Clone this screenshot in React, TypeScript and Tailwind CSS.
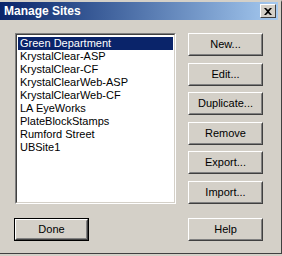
import React from 'react';

const sites = [
  'Green Department',
  'KrystalClear-ASP',
  'KrystalClear-CF',
  'KrystalClearWeb-ASP',
  'KrystalClearWeb-CF',
  'LA EyeWorks',
  'PlateBlockStamps',
  'Rumford Street',
  'UBSite1',
];

const WinButton = ({ label, className = '', isDefault = false }: { label: string; className?: string; isDefault?: boolean }) => (
  <div className={`w-[75px] h-[23px] ${isDefault ? 'border border-black' : ''} ${className}`}>
    <div className="w-full h-full border border-t-white border-l-white border-r-[#404040] border-b-[#404040]">
      <div className="w-full h-full border border-t-[#d4d0c8] border-l-[#d4d0c8] border-r-[#808080] border-b-[#808080] flex items-center justify-center text-black">
        {label}
      </div>
    </div>
  </div>
);

export default function App() {
  const selected = 0;
  return (
    <div
      className="w-[282px] h-[256px] bg-[#d4d0c8] overflow-hidden text-[11px] leading-none"
      style={{ fontFamily: '"Liberation Sans", Arial, sans-serif' }}
    >
      <div className="h-[254px] w-[282px] border-t-2 border-t-[#d4d0c8] border-r border-r-[#404040] border-b border-b-[#404040] flex flex-col">
        {/* Title bar */}
        <div className="h-[18px] mr-[3px] bg-gradient-to-r from-[#0a246a] to-[#a6caf0] flex items-center justify-between pl-[4px] pr-[2px]">
          <span className="text-white font-bold text-[12px]">Manage Sites</span>
          <div className="w-[16px] h-[14px] border border-t-white border-l-white border-r-[#404040] border-b-[#404040] bg-[#d4d0c8] flex items-center justify-center">
            <svg width="8" height="7" viewBox="0 0 8 7">
              <path d="M0 0h2l2 2 2-2h2L5 3.5 8 7H6L4 5 2 7H0l3-3.5z" fill="black" />
            </svg>
          </div>
        </div>

        {/* Body */}
        <div className="flex mt-[13px]">
          <div className="ml-[15px] w-[161px] h-[171px] border border-t-[#808080] border-l-[#808080] border-r-white border-b-white">
            <div className="w-full h-full border border-t-[#404040] border-l-[#404040] border-r-[#d4d0c8] border-b-[#d4d0c8] bg-white pt-[2px] px-[1px]">
              {sites.map((s, i) => (
                <div
                  key={s}
                  className={`h-[13px] pl-[2px] flex items-center whitespace-nowrap ${i === selected ? 'bg-[#0a246a] text-white' : 'text-black'}`}
                >
                  {s}
                </div>
              ))}
            </div>
          </div>
          <div className="ml-[12px] flex flex-col">
            <WinButton label="New..." />
            <WinButton label="Edit..." className="mt-[7px]" />
            <WinButton label="Duplicate..." className="mt-[6px]" />
            <WinButton label="Remove" className="mt-[7px]" />
            <WinButton label="Export..." className="mt-[6px]" />
            <WinButton label="Import..." className="mt-[7px]" />
          </div>
        </div>

        <div className="flex mt-[14px]">
          <WinButton label="Done" className="ml-[14px]" isDefault />
          <WinButton label="Help" className="ml-[99px]" />
        </div>
      </div>
    </div>
  );
}
